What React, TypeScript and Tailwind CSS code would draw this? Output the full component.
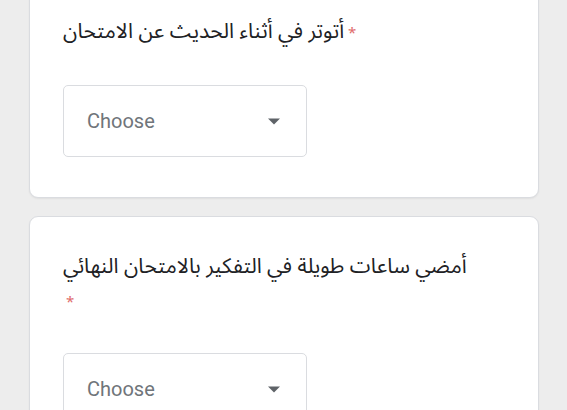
import React from 'react'

interface Question {
  title: string
  starOnNewLine?: boolean
}

const questions: Question[] = [
  { title: 'أتوتر في أثناء الحديث عن الامتحان' },
  { title: 'أمضي ساعات طويلة في التفكير بالامتحان النهائي', starOnNewLine: true },
]

const Dropdown = () => (
  <div className="flex h-[72px] w-[244px] items-center justify-between rounded-[5px] border border-[#dadce0] pl-[23px] pr-[26px]">
    <span className="font-['Roboto'] text-[20px] text-[#70757a]">Choose</span>
    <svg width="12" height="7" viewBox="0 0 10 5" className="mt-[1px]">
      <path d="M0 0 L5 5 L10 0 Z" fill="#5f6368" />
    </svg>
  </div>
)

const QuestionCard = ({ q, first }: { q: Question; first?: boolean }) => (
  <div
    className={`rounded-[9px] border border-[#dadce0] bg-white px-[33px] pb-[40px] pt-[33px] shadow-[0_1px_2px_rgba(0,0,0,0.06)] ${
      first ? '-mt-[19px]' : ''
    }`}
  >
    <div className="text-[21px] leading-[33px] text-[#202124]">
      {q.title}
      {q.starOnNewLine ? (
        <div className="pl-[3px] pt-[4px] text-[15px] leading-[30px] text-[#e06c6c]">*</div>
      ) : (
        <span className="pl-[4px] text-[15px] text-[#e06c6c]">*</span>
      )}
    </div>
    <div className={q.starOnNewLine ? 'mt-[36px]' : 'mt-[35px]'}>
      <Dropdown />
    </div>
  </div>
)

export default function App() {
  return (
    <div className="h-[410px] overflow-hidden bg-[#ededed] font-['Noto_Sans_Arabic','Noto_Sans','DejaVu_Sans',sans-serif]">
      <div className="flex flex-col gap-[18px] pl-[29px] pr-[28px]">
        {questions.map((q, i) => (
          <QuestionCard key={i} q={q} first={i === 0} />
        ))}
      </div>
    </div>
  )
}
